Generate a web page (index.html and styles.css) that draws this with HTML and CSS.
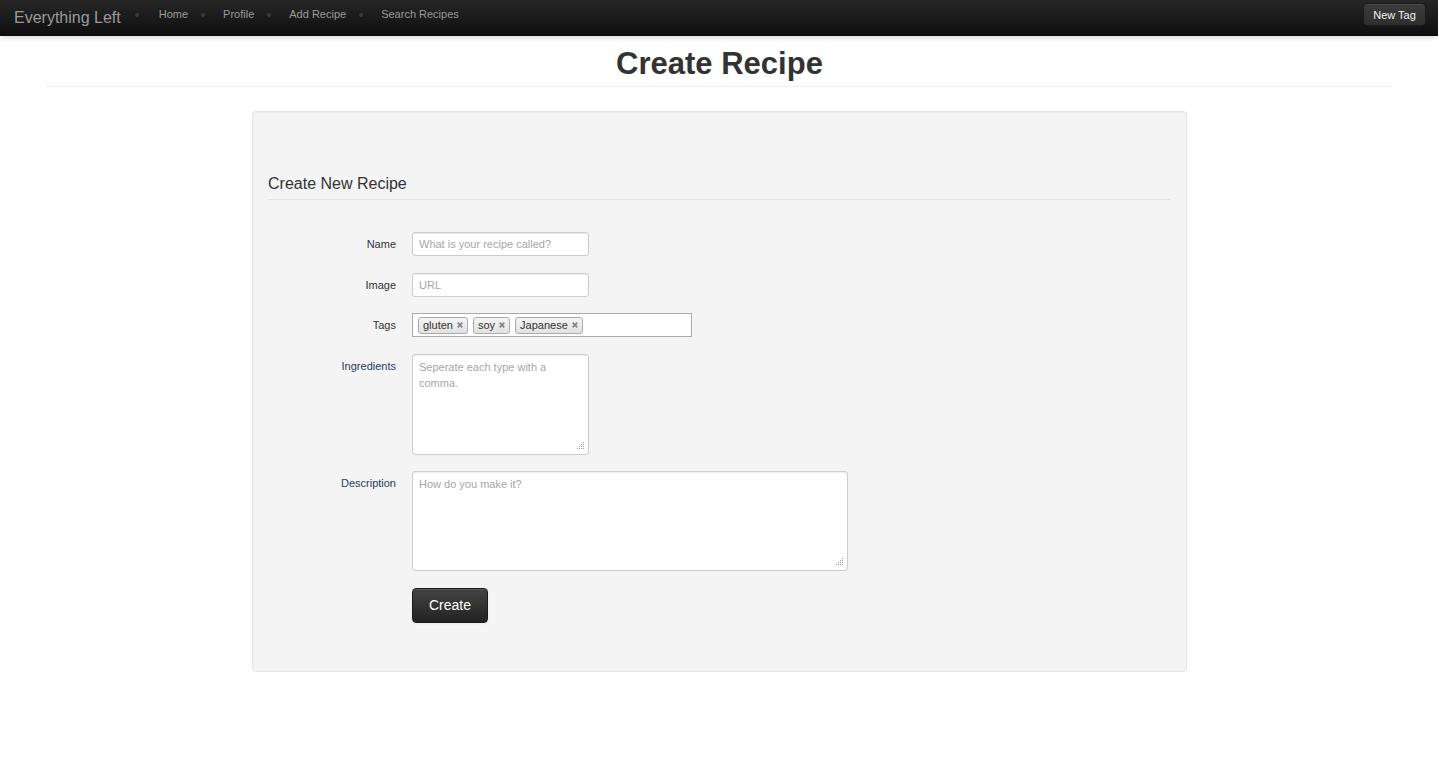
FILE: index.html
```html
<!DOCTYPE html>
<html>
<head>
<meta charset="utf-8">
<title>Create Recipe</title>
<link rel="stylesheet" href="styles.css">
</head>
<body>
<header class="navbar">
  <a class="brand" href="#">Everything Left</a>
  <nav class="nav">
    <span class="dot"></span>
    <a class="nav-link" href="#">Home</a>
    <span class="dot"></span>
    <a class="nav-link" href="#">Profile</a>
    <span class="dot"></span>
    <a class="nav-link" href="#">Add Recipe</a>
    <span class="dot"></span>
    <a class="nav-link" href="#">Search Recipes</a>
  </nav>
  <button class="btn-newtag" type="button">New Tag</button>
</header>

<main class="container">
  <h1 class="page-title">Create Recipe</h1>

  <section class="well">
    <form class="form">
      <h2 class="legend">Create New Recipe</h2>

      <div class="form-grid">
        <label class="control-label" for="name">Name</label>
        <div class="controls"><input id="name" class="input" type="text" placeholder="What is your recipe called?"></div>

        <label class="control-label" for="image">Image</label>
        <div class="controls"><input id="image" class="input" type="text" placeholder="URL"></div>

        <label class="control-label">Tags</label>
        <div class="controls">
          <div class="tags-box">
            <span class="tag">gluten<svg class="tag-x" width="6" height="6" viewBox="0 0 6 6"><path d="M0.7 0.7L5.3 5.3M5.3 0.7L0.7 5.3"/></svg></span>
            <span class="tag">soy<svg class="tag-x" width="6" height="6" viewBox="0 0 6 6"><path d="M0.7 0.7L5.3 5.3M5.3 0.7L0.7 5.3"/></svg></span>
            <span class="tag">Japanese<svg class="tag-x" width="6" height="6" viewBox="0 0 6 6"><path d="M0.7 0.7L5.3 5.3M5.3 0.7L0.7 5.3"/></svg></span>
          </div>
        </div>

        <label class="control-label label-alt" for="ingredients">Ingredients</label>
        <div class="controls">
          <div class="textarea-wrap">
            <textarea id="ingredients" class="textarea textarea-small" placeholder="Seperate each type with a comma."></textarea>
            <svg class="grip" width="10" height="10" viewBox="0 0 10 10"><rect x="8" y="1" width="1" height="1"/><rect x="8" y="3" width="1" height="1"/><rect x="6" y="3" width="1" height="1"/><rect x="8" y="5" width="1" height="1"/><rect x="6" y="5" width="1" height="1"/><rect x="4" y="5" width="1" height="1"/><rect x="8" y="7" width="1" height="1"/><rect x="6" y="7" width="1" height="1"/><rect x="4" y="7" width="1" height="1"/><rect x="2" y="7" width="1" height="1"/></svg>
          </div>
        </div>

        <label class="control-label label-alt" for="description">Description</label>
        <div class="controls">
          <div class="textarea-wrap">
            <textarea id="description" class="textarea textarea-wide" placeholder="How do you make it?"></textarea>
            <svg class="grip" width="10" height="10" viewBox="0 0 10 10"><rect x="8" y="1" width="1" height="1"/><rect x="8" y="3" width="1" height="1"/><rect x="6" y="3" width="1" height="1"/><rect x="8" y="5" width="1" height="1"/><rect x="6" y="5" width="1" height="1"/><rect x="4" y="5" width="1" height="1"/><rect x="8" y="7" width="1" height="1"/><rect x="6" y="7" width="1" height="1"/><rect x="4" y="7" width="1" height="1"/><rect x="2" y="7" width="1" height="1"/></svg>
          </div>
        </div>

        <span></span>
        <div class="controls"><button class="btn-create" type="button">Create</button></div>
      </div>
    </form>
  </section>
</main>
</body>
</html>
```

FILE: styles.css
```css
* { box-sizing: border-box; }

body {
  margin: 0;
  background: #fff;
  color: #333;
  font-family: "Liberation Sans", Arial, Helvetica, sans-serif;
  font-size: 11px;
  line-height: 18px;
}

a { text-decoration: none; }

/* ---------- navbar ---------- */
.navbar {
  height: 36px;
  display: flex;
  align-items: flex-start;
  background: linear-gradient(to bottom, #262626, #0f0f0f);
  box-shadow: 0 1px 6px rgba(0, 0, 0, 0.18);
  padding: 0 12px 0 14px;
  position: relative;
  z-index: 1;
}

.brand {
  color: #9a9a9a;
  font-size: 16px;
  line-height: 20px;
  padding-top: 8px;
}

.nav {
  display: flex;
  align-items: flex-start;
  padding-top: 5px;
  flex: 1;
}

.nav-link {
  color: #9a9a9a;
  font-size: 11px;
  line-height: 18px;
}

.dot {
  width: 4px;
  height: 4px;
  border-radius: 50%;
  background: #3a3a3a;
  margin: 8px 18px 0 13px;
}

.nav .dot:first-child { margin-left: 14px; margin-right: 20px; }

.btn-newtag {
  margin-top: 3px;
  width: 63px;
  height: 23px;
  padding: 0;
  font-family: inherit;
  font-size: 11px;
  color: #f2f2f2;
  background: linear-gradient(to bottom, #3c3c3c, #2e2e2e);
  border: 1px solid #1a1a1a;
  border-radius: 4px;
  box-shadow: inset 0 1px 0 rgba(255, 255, 255, 0.08);
}

/* ---------- page ---------- */
.container {
  padding: 0 45px 0 46px;
}

.page-title {
  margin: 8px 0 0;
  padding: 0 0 2px;
  font-size: 31px;
  line-height: 40px;
  font-weight: bold;
  color: #333;
  text-align: center;
  border-bottom: 1px solid #eeeeee;
}

.well {
  width: 935px;
  margin: 24px auto 0;
  background: #f4f4f4;
  border: 1px solid #e3e3e3;
  border-radius: 4px;
  box-shadow: inset 0 1px 1px rgba(0, 0, 0, 0.04);
  padding: 15px 15px 48px;
}

.legend {
  margin: 47px 0 0;
  padding-bottom: 5px;
  font-size: 16px;
  line-height: 20px;
  font-weight: normal;
  color: #333;
  border-bottom: 1px solid #e1e1e1;
}

.form-grid {
  margin-top: 32px;
  display: grid;
  grid-template-columns: 128px 1fr;
  column-gap: 16px;
  row-gap: 16.6px;
  align-items: start;
}

.control-label {
  text-align: right;
  padding-top: 3px;
  color: #333;
  font-size: 11px;
  line-height: 18px;
}

.label-alt { color: #2a3b5b; }

.input {
  display: block;
  width: 177px;
  height: 24px;
  padding: 3px 6px;
  font-family: inherit;
  font-size: 11px;
  color: #555;
  background: #fff;
  border: 1px solid #ccc;
  border-radius: 3px;
  box-shadow: inset 0 1px 1px rgba(0, 0, 0, 0.075);
}

.input::placeholder,
.textarea::placeholder { color: #a6a6a6; }

.tags-box {
  width: 280px;
  height: 24px;
  background: #fff;
  border: 1px solid #aaa;
  display: flex;
  align-items: center;
  gap: 5px;
  padding: 0 5px;
}

.tag {
  display: inline-flex;
  align-items: center;
  height: 17px;
  padding: 0 4px;
  gap: 4px;
  font-size: 11px;
  color: #333;
  background: linear-gradient(to bottom, #f4f4f4, #e2e2e2);
  border: 1px solid #aaa;
  border-radius: 3px;
}

.tag-x {
  stroke: #858585;
  stroke-width: 1.7;
  fill: none;
  flex: none;
}

.textarea-wrap {
  position: relative;
  display: inline-block;
  vertical-align: top;
}

.textarea {
  display: block;
  resize: none;
  padding: 4px 6px;
  font-family: inherit;
  font-size: 11px;
  line-height: 16px;
  color: #555;
  background: #fff;
  border: 1px solid #ccc;
  border-radius: 3px;
  box-shadow: inset 0 1px 1px rgba(0, 0, 0, 0.075);
}

.grip {
  position: absolute;
  right: 4px;
  bottom: 4px;
  fill: #9a9a9a;
}

.textarea-small { width: 177px; height: 101px; }
.textarea-wide { width: 436px; height: 100px; }

.btn-create {
  width: 76px;
  height: 35px;
  padding: 0;
  font-family: inherit;
  font-size: 14px;
  color: #fff;
  background: linear-gradient(to bottom, #444, #222);
  border: 1px solid #1c1c1c;
  border-radius: 4px;
  box-shadow: inset 0 1px 0 rgba(255, 255, 255, 0.1), 0 1px 2px rgba(0, 0, 0, 0.05);
}
```
